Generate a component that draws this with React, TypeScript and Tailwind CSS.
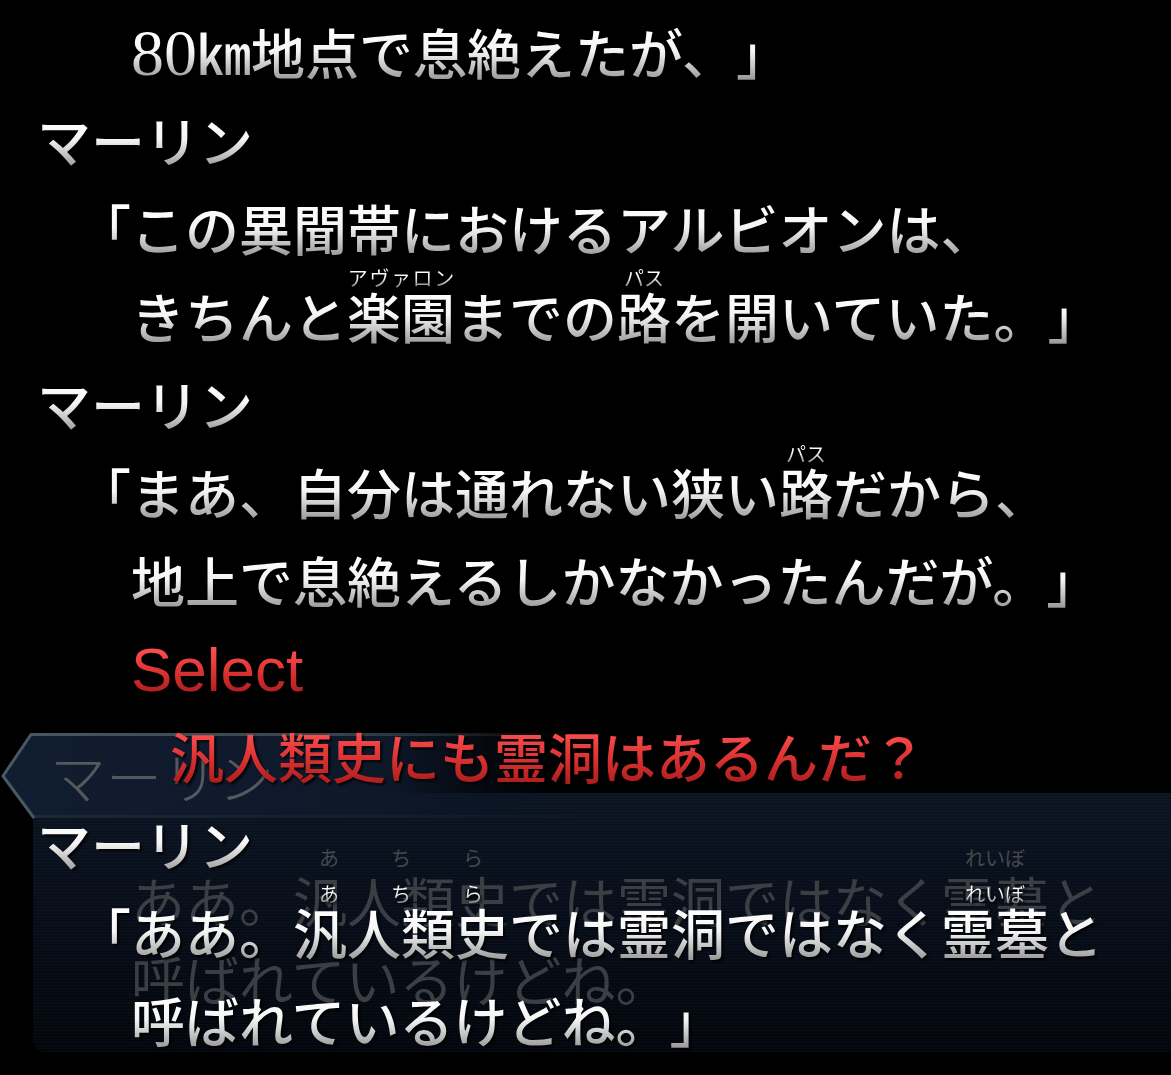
import React from "react";

const JP = "font-['Noto_Sans_CJK_JP','Noto_Sans_CJK_SC',sans-serif]";
const WHITE =
  "bg-[linear-gradient(180deg,#ffffff_22%,#f4f4f4_50%,#8e8e8e_90%)] bg-clip-text text-transparent";
const RED =
  "bg-[linear-gradient(180deg,#ff5050_18%,#e03535_50%,#a51818_92%)] bg-clip-text text-transparent";

type Variant = "fg" | "faded";

function T({ children, className = "" }: { children: React.ReactNode; className?: string }) {
  return <span className={`${WHITE} ${className}`}>{children}</span>;
}

function R({
  base,
  ruby,
  spread = true,
  variant = "fg",
}: {
  base: string;
  ruby: string;
  spread?: boolean;
  variant?: Variant;
}) {
  const faded = variant === "faded";
  return (
    <span className="relative inline-block">
      <span className={faded ? "text-[#3b3e42]" : WHITE}>{base}</span>
      <span
        className={`absolute inset-x-0 flex text-[20px] font-normal leading-none ${
          faded ? "top-[-12px]" : "top-[-4px]"
        } ${spread ? "justify-around" : "justify-center"}`}
      >
        {ruby.split("").map((c, i) => (
          <span key={i} className={faded ? "text-[#46494d]" : WHITE}>
            {c}
          </span>
        ))}
      </span>
    </span>
  );
}

function Row({ indent, children }: { indent: string; children: React.ReactNode }) {
  return (
    <div
      className={`h-[88px] shrink-0 whitespace-nowrap leading-[88px] [filter:drop-shadow(2px_2px_1px_rgba(0,0,0,0.85))] ${indent}`}
    >
      {children}
    </div>
  );
}

function Plate() {
  return (
    <svg className="absolute inset-0" width="620" height="86" viewBox="0 0 620 86">
      <defs>
        <linearGradient id="pf" x1="0" y1="0" x2="620" y2="0" gradientUnits="userSpaceOnUse">
          <stop offset="0" stopColor="#111d30" stopOpacity="1" />
          <stop offset="0.62" stopColor="#0d1829" stopOpacity="1" />
          <stop offset="0.9" stopColor="#0a1320" stopOpacity="0" />
        </linearGradient>
        <linearGradient id="ps" x1="0" y1="0" x2="620" y2="0" gradientUnits="userSpaceOnUse">
          <stop offset="0" stopColor="#4a5862" stopOpacity="1" />
          <stop offset="0.55" stopColor="#36434c" stopOpacity="1" />
          <stop offset="0.9" stopColor="#36434c" stopOpacity="0" />
        </linearGradient>
        <linearGradient id="pb" x1="0" y1="0" x2="620" y2="0" gradientUnits="userSpaceOnUse">
          <stop offset="0" stopColor="#1f2a36" stopOpacity="1" />
          <stop offset="0.8" stopColor="#141d29" stopOpacity="0.6" />
          <stop offset="1" stopColor="#141d29" stopOpacity="0" />
        </linearGradient>
      </defs>
      <path d="M31 1.5 L620 1.5 L620 85 L34 85 L3 43 Z" fill="url(#pf)" />
      <path d="M34 83.5 L620 83.5" stroke="url(#pb)" strokeWidth="3" fill="none" />
      <path
        d="M620 1.5 L31 1.5 L3 43 L34 85"
        stroke="url(#ps)"
        strokeWidth="3"
        fill="none"
        strokeLinejoin="round"
      />
    </svg>
  );
}

export default function App() {
  return (
    <div
      className={`relative h-[1075px] w-[1171px] overflow-hidden bg-black [text-spacing-trim:space-all] ${JP}`}
    >
      {/* game scene layer */}
      <div className="pt-[733px]">
        <div className="relative z-10 flex h-[86px] w-[620px] items-center pb-[2px] pl-[50px]">
          <Plate />
          <span className="relative text-[56px] font-light leading-none text-[#55585c]">マーリン</span>
        </div>
        <div className="-mt-[26px] ml-[33px] h-[259px] rounded-bl-[12px] bg-[repeating-linear-gradient(180deg,rgba(255,255,255,0.018)_0px,rgba(255,255,255,0.018)_1px,transparent_1px,transparent_3px),linear-gradient(180deg,#0b1423_0%,#070d18_50%,#03060c_100%)] pl-[98px] pt-[67px] text-[54px] text-[#3b3e42]">
          <div className="h-[79px] whitespace-nowrap leading-[79px]">
            ああ。
            <R base="汎人類史" ruby="あちら" variant="faded" />
            では霊洞ではなく
            <R base="霊墓" ruby="れいぼ" spread={false} variant="faded" />と
          </div>
          <div className="h-[79px] whitespace-nowrap leading-[79px]">呼ばれているけどね。</div>
        </div>
      </div>

      {/* backlog overlay */}
      <div className="absolute inset-0 z-20 flex flex-col pt-[8px] text-[54px] font-medium">
        <Row indent="pl-[131px]">
          <T className="font-['Liberation_Serif',serif] text-[66px] font-normal">80</T>
          <T>㎞地点で息絶えたが、」</T>
        </Row>
        <Row indent="pl-[37px]">
          <T>マーリン</T>
        </Row>
        <Row indent="pl-[77px]">
          <T>「この異聞帯におけるアルビオンは、</T>
        </Row>
        <Row indent="pl-[131px]">
          <T>きちんと</T>
          <R base="楽園" ruby="アヴァロン" />
          <T>までの</T>
          <R base="路" ruby="パス" spread={false} />
          <T>を開いていた。」</T>
        </Row>
        <Row indent="pl-[37px]">
          <T>マーリン</T>
        </Row>
        <Row indent="pl-[77px]">
          <T>「まあ、自分は通れない狭い</T>
          <R base="路" ruby="パス" spread={false} />
          <T>だから、</T>
        </Row>
        <Row indent="pl-[131px]">
          <T>地上で息絶えるしかなかったんだが。」</T>
        </Row>
        <Row indent="pl-[131px]">
          <span className={`${RED} font-['Liberation_Sans',sans-serif] text-[62px] font-normal`}>Select</span>
        </Row>
        <Row indent="pl-[170px]">
          <span className={RED}>汎人類史にも霊洞はあるんだ？</span>
        </Row>
        <Row indent="pl-[37px]">
          <T>マーリン</T>
        </Row>
        <Row indent="pl-[77px]">
          <T>「ああ。</T>
          <R base="汎人類史" ruby="あちら" />
          <T>では霊洞ではなく</T>
          <R base="霊墓" ruby="れいぼ" spread={false} />
          <T>と</T>
        </Row>
        <Row indent="pl-[131px]">
          <T>呼ばれているけどね。」</T>
        </Row>
      </div>
    </div>
  );
}
